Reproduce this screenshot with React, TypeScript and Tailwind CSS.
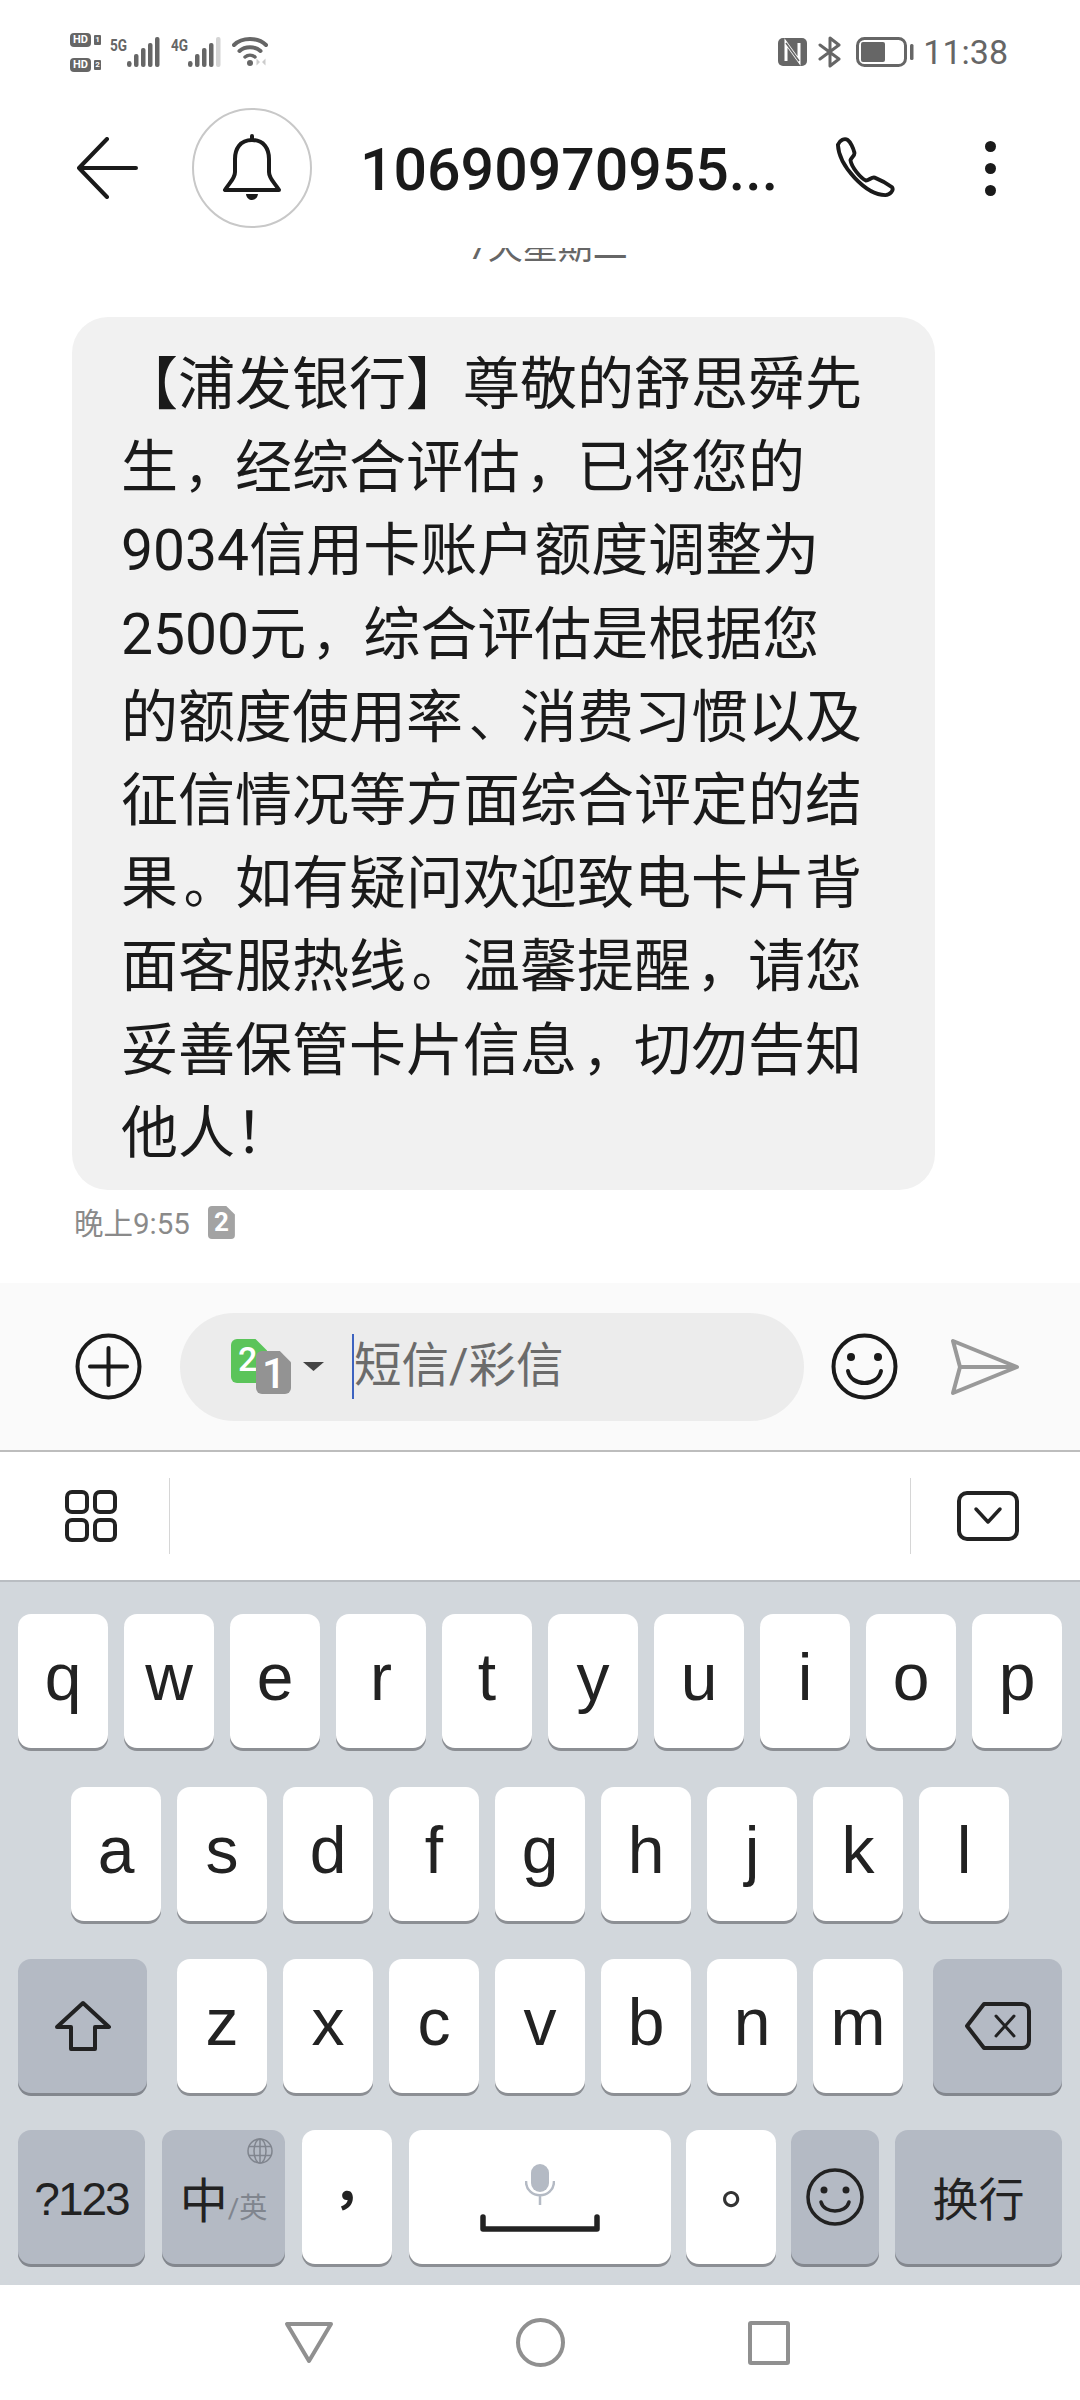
const cjk = "font-['Roboto','Noto_Sans_CJK_SC',sans-serif]";
const cjkTc = "font-['Noto_Sans_CJK_TC',sans-serif]";
const cutCorner = '[clip-path:polygon(0_0,68%_0,100%_26%,100%_100%,0_100%)]';

const messageLines = [
  '【浦发银行】尊敬的舒思舜先',
  '生，经综合评估，已将您的',
  '9034信用卡账户额度调整为',
  '2500元，综合评估是根据您',
  '的额度使用率、消费习惯以及',
  '征信情况等方面综合评定的结',
  '果。如有疑问欢迎致电卡片背',
  '面客服热线。温馨提醒，请您',
  '妥善保管卡片信息，切勿告知',
  '他人！',
];

// punctuation sits further right in the em box on this phone's font
const MessageLine = ({ line }: { line: string }) => (
  <div className="h-[83.2px] whitespace-nowrap">
    {line.split(/([，。、])/).map((part, i) =>
      /^[，。、]$/.test(part) ? (
        <span key={i} className="inline-block w-[57px] pl-[5.7px] text-[51.3px] leading-none">{part}</span>
      ) : (
        <span key={i}>{part}</span>
      )
    )}
  </div>
);

const SignalBars = ({ lastOff = false }: { lastOff?: boolean }) => (
  <svg width="33" height="30" viewBox="0 0 33 30">
    <rect x="0" y="24" width="4.5" height="6" rx="2.2" fill="#666" />
    <rect x="7" y="17" width="4.5" height="13" rx="2" fill="#666" />
    <rect x="14" y="11" width="4.5" height="19" rx="2" fill="#666" />
    <rect x="21" y="6" width="4.5" height="24" rx="2" fill="#666" />
    <rect x="28" y="0" width="4.5" height="30" rx="2" fill={lastOff ? '#d4d4d4' : '#666'} />
  </svg>
);

const HdBadge = ({ n }: { n: string }) => (
  <div className="flex items-center gap-[3px]">
    <span className="w-[21px] h-[14px] rounded-[4px] bg-[#666] text-white text-[11px] leading-[14px] font-bold text-center font-['Roboto',sans-serif]">
      HD
    </span>
    <span className="w-[7px] h-[10px] rounded-[1px] bg-[#666] text-white text-[8px] leading-[10px] font-bold text-center font-['Roboto',sans-serif]">
      {n}
    </span>
  </div>
);

const StatusBar = () => (
  <div className="h-[100px] flex items-center justify-between pl-[70px] pr-[72px] pt-[4px]">
    <div className="flex items-center">
      <div className="flex flex-col gap-[11px]">
        <HdBadge n="1" />
        <HdBadge n="2" />
      </div>
      <span className="ml-[9px] mb-[14px] w-[17px] text-[#666] text-[17px] leading-none font-bold font-['Roboto',sans-serif] scale-x-[0.8] origin-left">5G</span>
      <SignalBars />
      <span className="ml-[11px] mb-[14px] w-[17px] text-[#666] text-[17px] leading-none font-bold font-['Roboto',sans-serif] scale-x-[0.8] origin-left">4G</span>
      <SignalBars lastOff />
      <svg className="ml-[11px]" width="37" height="30" viewBox="0 0 37 30" fill="none">
        <path d="M2 8 C10 0 26 0 34 8" stroke="#666" strokeWidth="4" strokeLinecap="round" />
        <path d="M7.5 14 C13 9 23 9 28.5 14" stroke="#666" strokeWidth="4" strokeLinecap="round" />
        <path d="M13 20 C16 17.5 20 17.5 23 20" stroke="#666" strokeWidth="3.5" strokeLinecap="round" />
        <circle cx="18" cy="26" r="3" fill="#666" />
        <path d="M28 25 L24.5 21.5 L24.5 28.5 Z M30 25 L33.5 21.5 L33.5 28.5 Z" fill="#ccc" />
      </svg>
    </div>
    <div className="flex items-center">
      <svg width="29" height="28" viewBox="0 0 29 28" fill="none">
        <rect x="0" y="0" width="29" height="28" rx="5" fill="#666" />
        <path d="M8 23 V5 L21 23 V5" stroke="#fff" strokeWidth="3" />
        <path d="M8 5 L21 23" stroke="#666" strokeWidth="1.5" />
      </svg>
      <svg className="ml-[11px]" width="24" height="32" viewBox="0 0 24 32" fill="none">
        <path d="M2 9 L21 23 L12 30 V2 L21 9 L2 23" stroke="#666" strokeWidth="3" strokeLinejoin="round" strokeLinecap="round" />
      </svg>
      <svg className="ml-[14px]" width="58" height="30" viewBox="0 0 58 30" fill="none">
        <rect x="1.5" y="1.5" width="48" height="27" rx="7" stroke="#666" strokeWidth="3" />
        <rect x="5" y="5" width="24" height="20" rx="2" fill="#666" />
        <rect x="54" y="7" width="3.5" height="16" rx="1.5" fill="#666" />
      </svg>
      <span className="ml-[9px] text-[#666] text-[34px] leading-none font-['Roboto',sans-serif]">11:38</span>
    </div>
  </div>
);

const Header = () => (
  <div className="h-[148px] flex items-start">
    <svg className="ml-[76px] mt-[37px]" width="62" height="62" viewBox="0 0 62 62" fill="none">
      <path d="M31 2 L3 31 L31 60 M3 31 H60" stroke="#1a1a1a" strokeWidth="4" strokeLinecap="round" strokeLinejoin="round" />
    </svg>
    <div className="ml-[54px] mt-[8px] w-[120px] h-[120px] rounded-full border-2 border-[#c8c8c8] flex items-center justify-center">
      <svg width="60" height="68" viewBox="0 0 60 68" fill="none">
        <path d="M30 2 V6 M30 6 C18 6 13 15 13 25 V38 C13 45 7 49 3 56 H57 C53 49 47 45 47 38 V25 C47 15 42 6 30 6 Z" stroke="#1a1a1a" strokeWidth="4" strokeLinejoin="round" strokeLinecap="round" />
        <path d="M24 60 H36 C35 68 25 68 24 60 Z" fill="#1a1a1a" />
      </svg>
    </div>
    <span className="ml-[48px] mt-[38px] w-[440px] text-[59px] leading-[64px] font-medium text-[#1a1a1a] font-['Roboto',sans-serif] whitespace-nowrap">
      10690970955...
    </span>
    <svg className="ml-[34px] mt-[37px]" width="62" height="60" viewBox="0 0 64 62" fill="none">
      <path d="M4 8 C6 3 11 1 14 3 C17 5 20 12 21 16 C22 19 18 21 17 24 C18 31 27 42 33 45 C36 45 39 41 42 42 C47 44 56 49 60 52 C62 55 58 60 53 60 C33 60 5 30 4 8 Z" stroke="#1a1a1a" strokeWidth="4" strokeLinejoin="round" />
    </svg>
    <div className="ml-[89px] mt-[41px] flex flex-col gap-[11px]">
      <div className="w-[11px] h-[11px] rounded-full bg-[#1a1a1a]" />
      <div className="w-[11px] h-[11px] rounded-full bg-[#1a1a1a]" />
      <div className="w-[11px] h-[11px] rounded-full bg-[#1a1a1a]" />
    </div>
  </div>
);

const Thread = () => (
  <div className="h-[1035px]">
    <div className="h-[15px] overflow-hidden flex justify-center">
      <span className={`ml-[16px] -mt-[22px] h-[44px] text-[35px] leading-[44px] text-[#666] whitespace-nowrap ${cjk}`}>7天星期二</span>
    </div>
    <div className={`mt-[54px] ml-[72px] w-[863px] h-[873px] rounded-[36px] bg-[#f1f1f1] pl-[49px] pt-[26px] text-[57px] leading-[83.2px] text-[#1a1a1a] ${cjk}`}>
      {messageLines.map((line) => (
        <MessageLine key={line} line={line} />
      ))}
    </div>
    <div className="mt-[16px] ml-[74px] flex items-start">
      <span className={`mt-[2px] text-[29.5px] leading-[33px] text-[#8a8a8a] ${cjk}`}>晚上9:55</span>
      <span className={`ml-[18px] w-[27px] h-[33px] rounded-[4px] bg-[#a3a3a3] text-white text-[26px] leading-[33px] font-bold text-center font-['Roboto',sans-serif] ${cutCorner}`}>
        2
      </span>
    </div>
  </div>
);

const InputBar = () => (
  <div className="h-[169px] bg-[#fafafa] border-b-2 border-[#bdbdbd] flex items-center">
    <svg className="ml-[75px]" width="67" height="67" viewBox="0 0 67 67" fill="none">
      <circle cx="33.5" cy="33.5" r="31" stroke="#1a1a1a" strokeWidth="4" />
      <path d="M15 33.5 H52 M33.5 15 V52" stroke="#1a1a1a" strokeWidth="4" strokeLinecap="round" />
    </svg>
    <div className="ml-[38px] w-[624px] h-[108px] rounded-[54px] bg-[#ececec] flex items-center">
      <div className="relative ml-[51px] w-[60px] h-[55px]">
        <span className={`absolute left-0 top-0 w-[36px] h-[44px] rounded-[6px] bg-[#5bc45a] text-white text-[34px] leading-[40px] font-medium pl-[7px] font-['Roboto',sans-serif] ${cutCorner}`}>2</span>
        <span className={`absolute left-[25px] top-[12px] w-[35px] h-[43px] rounded-[6px] bg-[#939393] text-white text-[42px] leading-[46px] font-medium pl-[6px] font-['Roboto',sans-serif] ${cutCorner}`}>1</span>
      </div>
      <svg className="ml-[12px]" width="21" height="9" viewBox="0 0 21 9">
        <path d="M0 0 H21 L10.5 9 Z" fill="#444" />
      </svg>
      <div className="ml-[28px] w-[2px] h-[65px] bg-[#3d63c0]" />
      <span className={`text-[47.5px] leading-none text-[#6b6b6b] whitespace-nowrap ${cjk}`}>短信/彩信</span>
    </div>
    <svg className="ml-[27px]" width="67" height="67" viewBox="0 0 67 67" fill="none">
      <circle cx="33.5" cy="33.5" r="31" stroke="#1a1a1a" strokeWidth="4" />
      <circle cx="20" cy="24" r="4" fill="#1a1a1a" />
      <circle cx="47" cy="24" r="4" fill="#1a1a1a" />
      <path d="M17 38 C20 54 47 54 50 38" stroke="#1a1a1a" strokeWidth="4" strokeLinecap="round" />
    </svg>
    <svg className="ml-[52px]" width="70" height="58" viewBox="0 0 70 58" fill="none">
      <path d="M3 3 L67 29 L3 55 L10 29 Z M10 29 H67" stroke="#999" strokeWidth="4" strokeLinejoin="round" />
    </svg>
  </div>
);

const Toolbar = () => (
  <div className="h-[128px] bg-white flex items-center">
    <svg className="ml-[65px]" width="52" height="52" viewBox="0 0 52 52" fill="none">
      <rect x="2" y="2" width="20" height="20" rx="5" stroke="#222" strokeWidth="4" />
      <rect x="30" y="2" width="20" height="20" rx="5" stroke="#222" strokeWidth="4" />
      <rect x="2" y="30" width="20" height="20" rx="5" stroke="#222" strokeWidth="4" />
      <rect x="30" y="30" width="20" height="20" rx="5" stroke="#222" strokeWidth="4" />
    </svg>
    <div className="ml-[52px] w-px h-[76px] bg-[#d6d6d6]" />
    <div className="flex-1" />
    <div className="w-px h-[76px] bg-[#d6d6d6]" />
    <svg className="ml-[46px] mr-[61px]" width="62" height="50" viewBox="0 0 62 50" fill="none">
      <rect x="2" y="2" width="58" height="46" rx="8" stroke="#222" strokeWidth="4" />
      <path d="M19 18 L31 31 L43 18" stroke="#222" strokeWidth="3.5" strokeLinecap="round" strokeLinejoin="round" />
    </svg>
  </div>
);

const Key = ({ label, className = 'w-[90px]' }: { label?: React.ReactNode; className?: string }) => (
  <div className={`h-[134px] mb-[3px] pb-[8px] rounded-[13px] bg-white shadow-[0_3px_0_#8c8f94] flex items-center justify-center text-[66px] leading-none text-[#222] font-['Liberation_Sans',sans-serif] ${className}`}>
    {label}
  </div>
);

const FnKey = ({ children, className }: { children?: React.ReactNode; className: string }) => (
  <div className={`relative h-[134px] mb-[3px] rounded-[13px] bg-[#b4bac4] shadow-[0_3px_0_#83878e] flex items-center justify-center text-[#222] ${className}`}>
    {children}
  </div>
);

const Keyboard = () => (
  <div className="h-[705px] bg-[#d2d7dc] border-t-2 border-[#b9bdc2] pt-[32px]">
    <div className="flex justify-center gap-[16px]">
      {'qwertyuiop'.split('').map((k) => <Key key={k} label={k} />)}
    </div>
    <div className="mt-[36px] flex justify-center gap-[16px]">
      {'asdfghjkl'.split('').map((k) => <Key key={k} label={k} />)}
    </div>
    <div className="mt-[35px] flex pl-[18px]">
      <FnKey className="w-[129px]">
        <svg width="60" height="52" viewBox="0 0 60 52" fill="none">
          <path d="M30 3 L56 27 H42 V49 H18 V27 H4 Z" stroke="#222" strokeWidth="4" strokeLinejoin="round" />
        </svg>
      </FnKey>
      <div className="ml-[30px] flex gap-[16px]">
        {'zxcvbnm'.split('').map((k) => <Key key={k} label={k} />)}
      </div>
      <FnKey className="ml-[30px] w-[129px]">
        <svg width="68" height="50" viewBox="0 0 68 50" fill="none">
          <path d="M20 3 H58 C62 3 65 6 65 10 V40 C65 44 62 47 58 47 H20 L3 25 Z" stroke="#222" strokeWidth="4" strokeLinejoin="round" />
          <path d="M32 15 L50 35 M50 15 L32 35" stroke="#222" strokeWidth="3" strokeLinecap="round" />
        </svg>
      </FnKey>
    </div>
    <div className="mt-[34px] flex pl-[18px]">
      <FnKey className="w-[127px]">
        <span className="mt-[4px] text-[46px] leading-none tracking-[-2px] font-['Liberation_Sans',sans-serif]">?123</span>
      </FnKey>
      <FnKey className="ml-[17px] w-[123px]">
        <svg className="absolute right-[12px] top-[8px]" width="26" height="26" viewBox="0 0 26 26" fill="none" stroke="#80858e" strokeWidth="1.5">
          <circle cx="13" cy="13" r="12" />
          <ellipse cx="13" cy="13" rx="6" ry="12" />
          <path d="M13 1 V25 M2 8.5 H24 M2 17.5 H24" />
        </svg>
        <span className={`mt-[10px] text-[48px] leading-none ${cjk}`}>中</span>
        <span className={`mt-[24px] text-[28px] leading-none text-[#80858e] ${cjk}`}>/英</span>
      </FnKey>
      <Key className="ml-[17px] w-[90px]" label={<span className={`mt-[8px] text-[52px] leading-none font-bold ${cjkTc}`}>，</span>} />
      <div className="ml-[17px] relative w-[262px] h-[134px] mb-[3px] rounded-[13px] bg-white shadow-[0_3px_0_#8c8f94] flex flex-col items-center">
        <svg className="mt-[34px]" width="30" height="42" viewBox="0 0 30 42" fill="none">
          <rect x="6" y="0" width="18" height="28" rx="9" fill="#b4bac4" />
          <path d="M1 17 C1 36 29 36 29 17 M15 32 V41" stroke="#b4bac4" strokeWidth="2.5" />
        </svg>
        <svg className="mt-[8px]" width="120" height="18" viewBox="0 0 120 18" fill="none">
          <path d="M3 3 V15 H117 V3" stroke="#222" strokeWidth="5.5" strokeLinecap="round" strokeLinejoin="round" />
        </svg>
      </div>
      <Key className="ml-[15px] w-[90px]" label={<span className={`mt-[8px] text-[52px] leading-none font-medium text-[#333] ${cjkTc}`}>。</span>} />
      <FnKey className="ml-[15px] w-[88px]">
        <svg width="58" height="58" viewBox="0 0 58 58" fill="none">
          <circle cx="29" cy="29" r="27" stroke="#222" strokeWidth="3.5" />
          <circle cx="18" cy="22" r="3.5" fill="#222" />
          <circle cx="40" cy="22" r="3.5" fill="#222" />
          <path d="M15 34 C18 46 40 46 43 34" stroke="#222" strokeWidth="3.5" strokeLinecap="round" />
        </svg>
      </FnKey>
      <FnKey className="ml-[16px] w-[167px]">
        <span className={`mt-[5px] text-[46px] leading-none ${cjk}`}>换行</span>
      </FnKey>
    </div>
  </div>
);

const NavBar = () => (
  <div className="h-[115px] bg-white flex items-center">
    <svg className="ml-[284px]" width="50" height="43" viewBox="0 0 50 43" fill="none">
      <path d="M3 3 H47 L25 40 Z" stroke="#909090" strokeWidth="4" strokeLinejoin="round" />
    </svg>
    <div className="ml-[182px] w-[49px] h-[49px] rounded-full border-4 border-[#909090]" />
    <div className="ml-[183px] w-[42px] h-[44px] rounded-[3px] border-4 border-[#909090]" />
  </div>
);

export default function App() {
  return (
    <div className="w-[1080px] h-[2400px] bg-white overflow-hidden">
      <StatusBar />
      <Header />
      <Thread />
      <InputBar />
      <Toolbar />
      <Keyboard />
      <NavBar />
    </div>
  );
}
